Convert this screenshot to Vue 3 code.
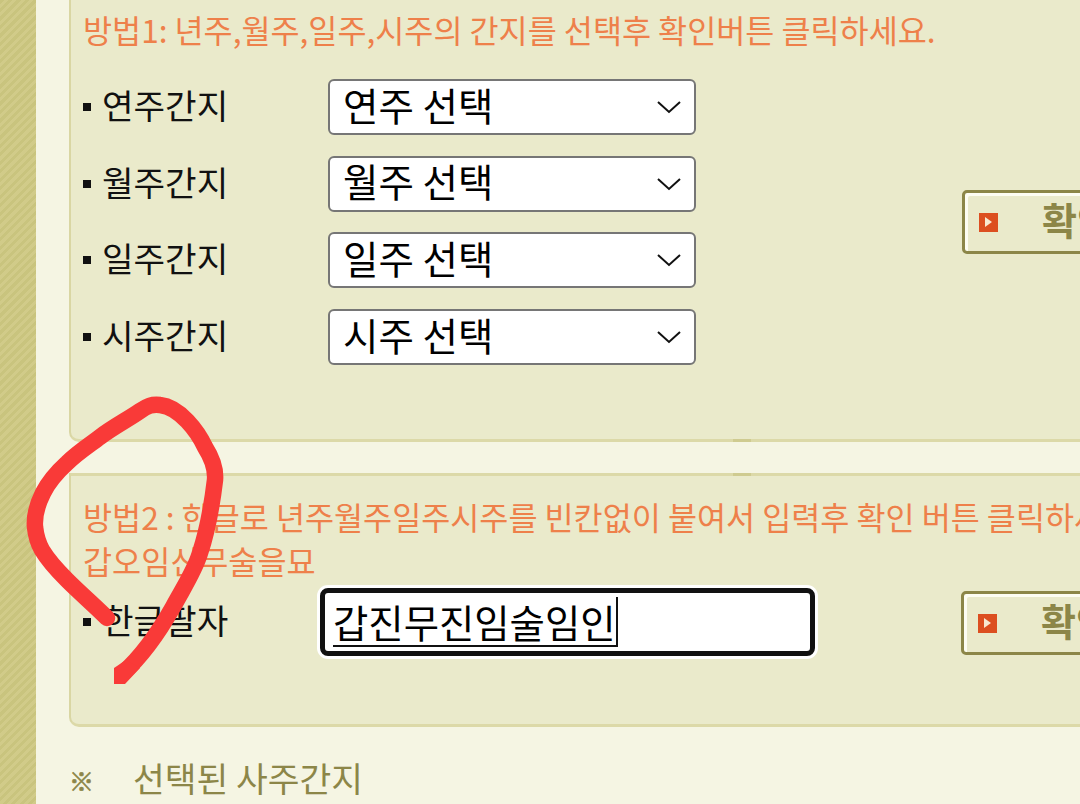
<script setup>
const rows = [
  { label: '연주간지', value: '연주 선택' },
  { label: '월주간지', value: '월주 선택' },
  { label: '일주간지', value: '일주 선택' },
  { label: '시주간지', value: '시주 선택' },
]
</script>

<template>
  <div class="page">
    <div class="stripe"></div>
    <main class="main">
      <section class="panel first">
        <p class="title">방법1: 년주,월주,일주,시주의 간지를 선택후 확인버튼 클릭하세요.</p>
        <div class="body">
          <div class="rows">
            <div v-for="r in rows" :key="r.label" class="row">
              <span class="bullet"></span>
              <span class="label">{{ r.label }}</span>
              <div class="select">
                <span>{{ r.value }}</span>
                <svg width="26" height="14" viewBox="0 0 26 14"><path d="M2 2 L13 12 L24 2" fill="none" stroke="#111" stroke-width="2"/></svg>
              </div>
            </div>
          </div>
          <div class="btn"><span class="play"><i></i></span><b>확인</b></div>
        </div>
      </section>

      <section class="panel second">
        <p class="title">방법2 : 한글로 년주월주일주시주를 빈칸없이 붙여서 입력후 확인 버튼 클릭하세요.<br>갑오임신무술을묘</p>
        <div class="body">
          <div class="row">
            <span class="bullet"></span>
            <span class="label">한글팔자</span>
            <div class="input"><span class="typed">갑진무진임술임인</span></div>
          </div>
          <div class="btn"><span class="play"><i></i></span><b>확인</b></div>
        </div>
      </section>

      <div class="foot"><span class="mark">※</span><span>선택된 사주간지</span></div>
    </main>

    <svg class="scribble" width="240" height="310" viewBox="0 0 240 310">
      <path d="M103 293 C122 276 140 250 153 227 C165 205 175 190 180 173 C186 155 192 125 195 100 C196 88 192 78 185 67 C178 52 160 27 140 25 C132 24 127 26 120 31 C107 40 93 47 80 57 C68 66 57 73 47 83 C36 93 28 103 23 113 C17 125 14 135 15 147 C16 156 18 163 22 170 C28 180 38 191 47 200 C60 213 75 226 87 238" fill="none" stroke="#f93a38" stroke-width="16.5" stroke-linecap="round" stroke-linejoin="round"/>
      <path d="M94 288 L94 304 L105 304 L120 288 L106 280 Z" fill="#f93a38"/>
    </svg>
  </div>
</template>

<style>
html, body { margin: 0; overflow: hidden; }
</style>

<style scoped>
.page {
  position: relative;
  display: flex;
  width: 1080px;
  height: 804px;
  overflow: hidden;
  background: #f5f5e3;
  font-family: "Noto Sans CJK KR", "Noto Sans", sans-serif;
}
.stripe {
  flex: 0 0 36px;
  background: repeating-linear-gradient(135deg, #c9c47e 0 3px, #d1cb89 3px 6px);
}
.main {
  flex: 1;
  min-width: 0;
  padding-left: 33px;
  display: flex;
  flex-direction: column;
}
.panel {
  position: relative;
  flex: none;
  box-sizing: border-box;
  width: 1040px;
  background: #eaeacb;
  border-left: 2px solid #d9d6a3;
  border-bottom: 3px solid #dcd9a8;
  border-bottom-left-radius: 10px;
  padding-left: 12px;
}
.first { height: 442px; }
.first::after {
  content: "";
  position: absolute;
  left: 662px;
  bottom: -3px;
  width: 18px;
  height: 3px;
  background: #cfcb90;
}
.second {
  height: 254px;
  margin-top: 31px;
  border-top: 3px solid #dcd9a8;
  padding-top: 18px;
}
.second::before {
  content: "";
  position: absolute;
  left: 662px;
  top: -3px;
  width: 18px;
  height: 3px;
  background: #cfcb90;
}
.title {
  margin: 0;
  color: #ee804a;
  font-size: 31.6px;
  line-height: 44px;
  white-space: nowrap;
}
.first .title { padding-top: 7px; }
.body {
  display: flex;
  align-items: center;
}
.first .rows { padding-top: 28px; }
.rows {
  display: flex;
  flex-direction: column;
  gap: 20.7px;
}
.row {
  display: flex;
  align-items: center;
  height: 56px;
}
.bullet {
  flex: 0 0 8px;
  height: 8px;
  background: #111;
  margin-right: 11px;
}
.label {
  width: 226px;
  font-size: 34.3px;
  color: #111;
  line-height: 1;
  padding-bottom: 6px;
}
.select {
  box-sizing: border-box;
  width: 368px;
  height: 56px;
  display: flex;
  align-items: center;
  justify-content: space-between;
  padding: 0 12px 6px 13px;
  background: #fff;
  border: 2px solid #767676;
  border-radius: 6px;
  font-size: 38.5px;
  color: #000;
  line-height: 1;
}
.select svg { margin-top: 6px; }
.btn {
  box-sizing: border-box;
  flex: 0 0 200px;
  height: 64px;
  margin-left: 266px;
  margin-top: 28px;
  display: flex;
  align-items: center;
  border: 3px solid #8c8648;
  border-radius: 5px;
  box-shadow: inset 3px 3px 0 #fdfdf2;
  background: #eaeacb;
  padding-left: 14px;
}
.play {
  width: 19px;
  height: 19px;
  background: #dc4f20;
  display: flex;
  align-items: center;
  justify-content: center;
}
.play i {
  width: 0;
  height: 0;
  border-left: 7px solid #f8e8d0;
  border-top: 5px solid transparent;
  border-bottom: 5px solid transparent;
}
.btn b {
  margin-left: 44px;
  font-size: 38px;
  color: #8c8648;
  line-height: 1;
  padding-bottom: 6px;
}
.second .body { align-items: flex-start; }
.second .row { height: 68px; margin-top: 6px; }
.second .btn { margin-left: 146px; margin-top: 9px; }
.input {
  box-sizing: border-box;
  width: 495px;
  height: 68px;
  margin-left: -8px;
  padding: 0 8px;
  display: flex;
  align-items: center;
  background: #fff;
  border: 5px solid #111;
  border-radius: 8px;
  box-shadow: 0 0 0 3px #fff;
  font-size: 38.4px;
  color: #000;
}
.typed {
  line-height: 48px;
  border-bottom: 2px solid #111;
  border-right: 2px solid #111;
  white-space: nowrap;
}
.foot {
  flex: none;
  display: flex;
  align-items: center;
  height: 100px;
  color: #8c8648;
  font-size: 34.5px;
  line-height: 1;
}
.mark {
  width: 64px;
  font-size: 25px;
  font-weight: 700;
  -webkit-text-stroke: 0.7px #8c8648;
  padding-top: 6px;
}
.scribble {
  position: absolute;
  left: 20px;
  top: 380px;
  pointer-events: none;
}
</style>
